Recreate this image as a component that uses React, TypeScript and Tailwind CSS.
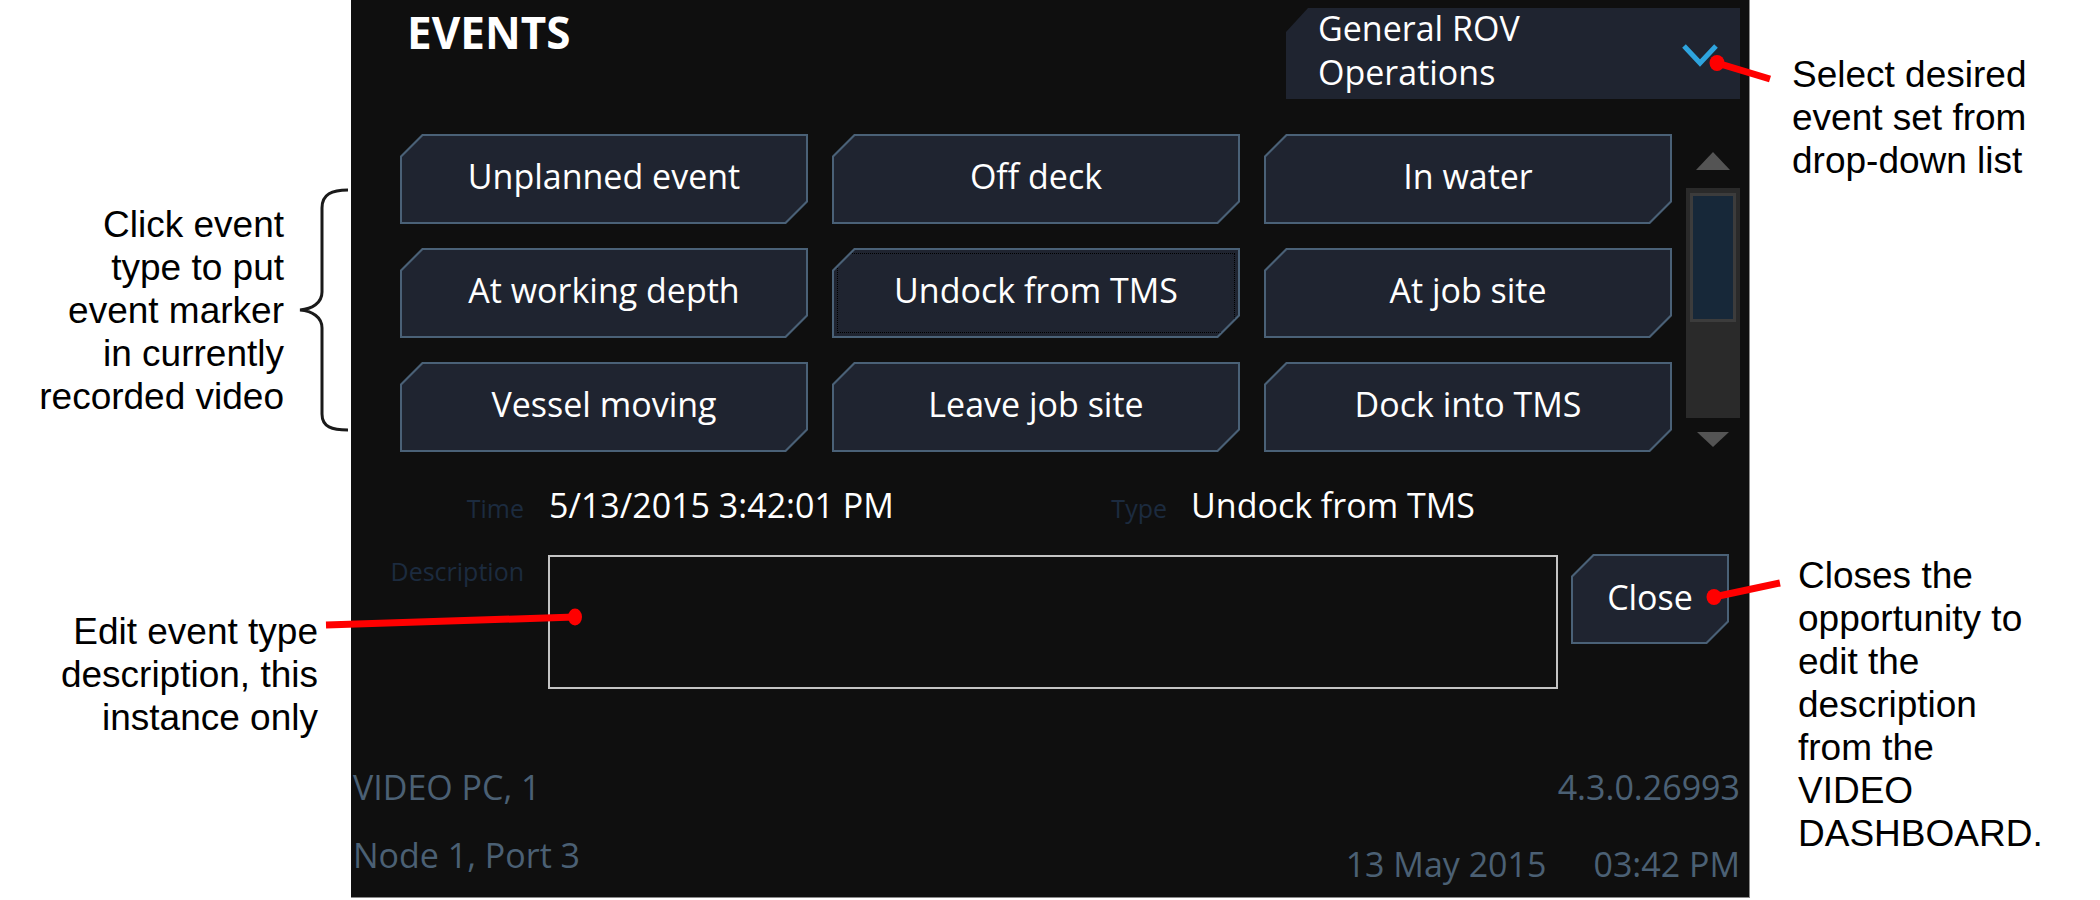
import React from "react";

const BTN_OUTER =
  "[clip-path:polygon(22px_0,100%_0,100%_calc(100%_-_22px),calc(100%_-_22px)_100%,0_100%,0_22px)]";
const BTN_INNER =
  "[clip-path:polygon(21px_0,100%_0,100%_calc(100%_-_21px),calc(100%_-_21px)_100%,0_100%,0_21px)]";

function EventButton({ label, focused }: { label: string; focused?: boolean }) {
  return (
    <div className={`h-full w-full bg-[#4a6177] p-[2px] ${BTN_OUTER}`}>
      <div
        className={`relative flex h-full w-full items-center justify-center bg-[#1f2430] pb-[5px] text-[34px] text-white ${BTN_INNER}`}
      >
        {focused && (
          <div className="absolute inset-[3px] border border-dotted border-black" />
        )}
        <span className="relative">{label}</span>
      </div>
    </div>
  );
}

const EVENTS = [
  "Unplanned event",
  "Off deck",
  "In water",
  "At working depth",
  "Undock from TMS",
  "At job site",
  "Vessel moving",
  "Leave job site",
  "Dock into TMS",
];

export default function App() {
  return (
    <div className="relative flex h-[900px] w-[2100px] overflow-hidden bg-white">
      {/* Left annotations */}
      <div className="w-[351px] shrink-0 font-['Liberation_Sans',Arial,sans-serif] text-[37px] leading-[43px] text-black">
        <div className="mt-[203px] pr-[67px] text-right">
          Click event
          <br />
          type to put
          <br />
          event marker
          <br />
          in currently
          <br />
          recorded video
        </div>
        <div className="mt-[192px] pr-[33px] text-right">
          Edit event type
          <br />
          description, this
          <br />
          instance only
        </div>
      </div>

      {/* Panel */}
      <div className="h-[898px] w-[1399px] shrink-0 border-b border-r border-[#8a8a8a] bg-[#0f0f0f] font-['Open_Sans','Noto_Sans',sans-serif]">
        {/* Header */}
        <div className="flex items-start">
          <div className="ml-[56px] mt-[10px] text-[44px] font-bold leading-[44px] text-white">
            EVENTS
          </div>
          <div className="ml-auto mr-[9px] mt-[8px] flex h-[91px] w-[454px] justify-between bg-[#1f2430] [clip-path:polygon(22px_0,100%_0,100%_100%,0_100%,0_24px)]">
            <div className="-mt-[2px] pl-[32px] text-[34px] leading-[44px] text-white">
              General ROV
              <br />
              Operations
            </div>
            <svg
              className="mr-[22px] mt-[35px] shrink-0"
              width="36"
              height="24"
              viewBox="0 0 36 24"
            >
              <polyline
                points="2,3 18,20 34,3"
                fill="none"
                stroke="#2ea4de"
                strokeWidth="5"
              />
            </svg>
          </div>
        </div>

        {/* Buttons + scrollbar */}
        <div className="mt-[35px] flex">
          <div className="ml-[49px] grid grid-cols-[repeat(3,408px)] grid-rows-[repeat(3,90px)] gap-[24px]">
            {EVENTS.map((e) => (
              <EventButton key={e} label={e} focused={e === "Undock from TMS"} />
            ))}
          </div>
          <div className="ml-[14px] flex w-[54px] flex-col items-center">
            <svg className="mt-[18px]" width="34" height="18" viewBox="0 0 34 18">
              <polygon points="17,0 34,18 0,18" fill="#545454" />
            </svg>
            <div className="mt-[18px] h-[230px] w-[54px] bg-[#2a2a2a] px-[4px] pt-[5px]">
              <div className="h-[129px] w-full border-[3px] border-[#3c3c3c] bg-[#172839]" />
            </div>
            <svg className="mt-[14px]" width="32" height="15" viewBox="0 0 32 15">
              <polygon points="0,0 32,0 16,15" fill="#545454" />
            </svg>
          </div>
        </div>

        {/* Time / Type row */}
        <div className="mt-[30px] flex items-baseline leading-[46px]">
          <div className="w-[173px] text-right text-[25px] leading-[36px] text-[#1c2b3f]">
            Time
          </div>
          <div className="ml-[25px] w-[480px] text-[34px] text-white">
            5/13/2015 3:42:01 PM
          </div>
          <div className="w-[138px] text-right text-[25px] leading-[36px] text-[#1c2b3f]">
            Type
          </div>
          <div className="ml-[24px] text-[34px] text-white">Undock from TMS</div>
        </div>

        {/* Description row */}
        <div className="mt-[26px] flex items-start">
          <div className="mt-[2px] w-[173px] text-right text-[25px] leading-[30px] text-[#1c2b3f]">
            Description
          </div>
          <div className="ml-[24px] mt-px h-[134px] w-[1010px] border-2 border-[#c4c4c4]" />
          <div className={`ml-[13px] h-[90px] w-[158px] bg-[#4a6177] p-[2px] ${BTN_OUTER}`}>
            <div
              className={`flex h-full w-full items-center justify-center bg-[#1f2430] pb-[4px] text-[34px] text-white ${BTN_INNER}`}
            >
              Close
            </div>
          </div>
        </div>

        {/* Footer */}
        <div className="mt-[75px] flex justify-between pl-[2px] pr-[9px] text-[34px] leading-[46px] text-[#4b6074]">
          <div>
            <div>VIDEO PC, 1</div>
            <div className="mt-[22px]">Node 1, Port 3</div>
          </div>
          <div className="flex flex-col items-end">
            <div>4.3.0.26993</div>
            <div className="mt-[31px] flex gap-[47px]">
              <span>13 May 2015</span>
              <span>03:42 PM</span>
            </div>
          </div>
        </div>
      </div>

      {/* Right annotations */}
      <div className="flex-1 font-['Liberation_Sans',Arial,sans-serif] text-[37px] leading-[43px] text-black">
        <div className="ml-[42px] mt-[53px]">
          Select desired
          <br />
          event set from
          <br />
          drop-down list
        </div>
        <div className="ml-[48px] mt-[372px]">
          Closes the
          <br />
          opportunity to
          <br />
          edit the
          <br />
          description
          <br />
          from the
          <br />
          VIDEO
          <br />
          DASHBOARD.
        </div>
      </div>

      {/* Callout overlay */}
      <svg
        className="pointer-events-none absolute left-0 top-0"
        width="2100"
        height="900"
        viewBox="0 0 2100 900"
      >
        <path
          d="M348 190 C332 190 322 194 322 208 L322 292 C322 303 312 309 300 310 C312 311 322 317 322 328 L322 414 C322 427 332 430 348 430"
          fill="none"
          stroke="#1a1a1a"
          strokeWidth="3"
        />
        <line x1="326" y1="625" x2="575" y2="617" stroke="#ff0000" strokeWidth="7" />
        <ellipse cx="575" cy="617" rx="7" ry="8.5" fill="#ff0000" />
        <line x1="1717" y1="63" x2="1770" y2="79" stroke="#ff0000" strokeWidth="7" />
        <ellipse cx="1717" cy="63" rx="7.5" ry="8" fill="#ff0000" />
        <line x1="1714" y1="597" x2="1780" y2="583" stroke="#ff0000" strokeWidth="7" />
        <ellipse cx="1714" cy="597" rx="7.5" ry="8" fill="#ff0000" />
      </svg>
    </div>
  );
}
